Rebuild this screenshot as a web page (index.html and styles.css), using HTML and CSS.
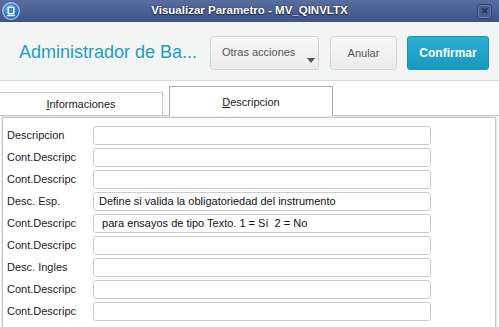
FILE: index.html
```html
<!DOCTYPE html>
<html lang="es">
<head>
  <meta charset="UTF-8">
  <title>Visualizar Parametro - MV_QINVLTX</title>
  <link rel="stylesheet" href="styles.css">
</head>
<body>
<div class="window">
  <div class="titlebar">
    <svg class="app-icon" width="18" height="18" viewBox="0 0 18 18">
      <defs>
        <radialGradient id="g1" cx="40%" cy="35%" r="65%">
          <stop offset="0" stop-color="#6fb4f0"/>
          <stop offset="1" stop-color="#1d5fb0"/>
        </radialGradient>
      </defs>
      <circle cx="9" cy="9" r="8.3" fill="url(#g1)" stroke="#b9cbe6" stroke-width="1.2"/>
      <rect x="5.5" y="4.5" width="7" height="8" rx="1.2" fill="#e9f2fc"/>
      <rect x="7" y="6" width="4" height="5" fill="#3f86d3"/>
      <rect x="5" y="13" width="8" height="1.3" fill="#e9f2fc"/>
    </svg>
    <span class="title">Visualizar Parametro - MV_QINVLTX</span>
    <span class="close">&#x2715;</span>
  </div>

  <div class="header">
    <h1>Administrador de Ba...</h1>
    <div class="actions">
      <button class="btn btn-menu">Otras acciones<i class="caret"></i></button>
      <button class="btn btn-cancel">Anular</button>
      <button class="btn btn-ok">Confirmar</button>
    </div>
  </div>

  <div class="tabs">
    <div class="tab"><u>I</u>nformaciones</div>
    <div class="tab active"><u>D</u>escripcion</div>
  </div>

  <div class="panel">
    <div class="row"><label>Descripcion</label><div class="field"></div></div>
    <div class="row"><label>Cont.Descripc</label><div class="field"></div></div>
    <div class="row"><label>Cont.Descripc</label><div class="field"></div></div>
    <div class="row"><label>Desc. Esp.</label><div class="field">Define si valida la obligatoriedad del instrumento</div></div>
    <div class="row"><label>Cont.Descripc</label><div class="field">&nbsp;para ensayos de tipo Texto. 1 = Sí&nbsp; 2 = No</div></div>
    <div class="row"><label>Cont.Descripc</label><div class="field"></div></div>
    <div class="row"><label>Desc. Ingles</label><div class="field"></div></div>
    <div class="row"><label>Cont.Descripc</label><div class="field"></div></div>
    <div class="row"><label>Cont.Descripc</label><div class="field"></div></div>
  </div>
</div>
</body>
</html>
```

FILE: styles.css
```css
html,body{margin:0;padding:0;}
body{background:#fff;font:11px/1.2 "Liberation Sans",Arial,sans-serif;color:#222;overflow:hidden;}
.window{width:499px;height:327px;overflow:hidden;}

/* barra de titulo */
.titlebar{height:22px;display:grid;grid-template-columns:22px 1fr 22px;align-items:center;background:linear-gradient(#5a6d9f,#3e5388);}
.app-icon{margin-left:2px;}
.title{text-align:center;color:#fff;font-weight:bold;font-size:11.5px;text-shadow:0 1px 1px #1d2745,0 0 2px #1d2745;}
.close{width:15px;height:15px;box-sizing:border-box;border:1px solid #2e3f6c;border-radius:3px;background:#485c91;box-shadow:inset 0 0 0 1px #6a7cab;color:#2a2f3d;font-size:9px;font-weight:bold;line-height:13px;text-align:center;}

/* cabecera */
.header{height:59px;box-sizing:border-box;padding:14px 10px 11px 19px;display:flex;align-items:center;justify-content:space-between;background:#f3f4f4;border-bottom:1px solid #d9d9d9;}
.header h1{margin:0;font-size:18px;font-weight:normal;color:#1d9dc4;}
.actions{display:flex;gap:11px;}
.btn{position:relative;height:34px;box-sizing:border-box;border:1px solid #d3d3d3;border-radius:3px;background:linear-gradient(#f8f8f8,#ebebeb);font:11px "Liberation Sans",Arial,sans-serif;color:#555;padding:0;}
.btn-menu{width:109px;text-align:left;padding-left:11px;padding-bottom:2px;}
.btn-cancel{width:67px;margin-right:-1px;}
.btn-ok{width:82px;border-color:#1893b6;background:linear-gradient(#2fadd0,#1799bd);color:#fff;font-size:12px;font-weight:bold;}
.caret{position:absolute;right:3px;bottom:6px;width:0;height:0;border-left:4px solid transparent;border-right:4px solid transparent;border-top:5px solid #555;}

/* pestanas */
.tabs{height:35px;box-sizing:border-box;padding-top:5px;display:flex;align-items:flex-end;gap:6px;border-bottom:1px solid #c4c4c4;}
.tab{box-sizing:border-box;width:164px;height:23px;margin-left:-1px;border:1px solid #c9c9c9;border-bottom:none;background:#fff;text-align:center;line-height:22px;color:#222;}
.tab.active{height:30px;margin-left:0;border-color:#a9a9a9;line-height:30px;margin-bottom:-1px;}
.tab u{text-decoration:underline;}

/* panel de campos */
.panel{height:220px;margin:1px 3px 0 2px;border:1px solid #c6c6c6;box-shadow:0 0 0 1px #eaeaea;padding:8px 0 0 4px;display:flex;flex-direction:column;gap:3px;}
.row{display:grid;grid-template-columns:86px 338px;align-items:center;height:19px;}
.row label{color:#222;}
.field{height:19px;box-sizing:border-box;border:1px solid #cccccc;border-radius:3px;background:#fff;padding-left:5px;line-height:17px;color:#111;white-space:pre;overflow:hidden;}
```
